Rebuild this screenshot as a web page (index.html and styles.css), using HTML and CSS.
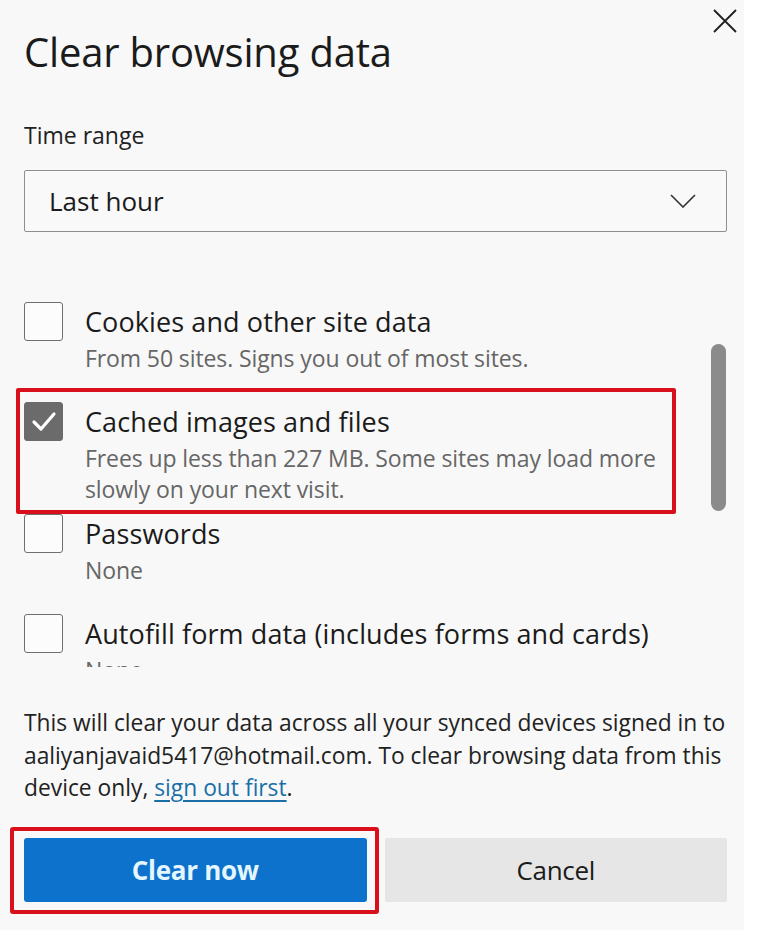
FILE: index.html
```html
<!DOCTYPE html>
<html lang="en">
<head>
<meta charset="utf-8">
<title>Clear browsing data</title>
<link rel="stylesheet" href="styles.css">
</head>
<body>
<div class="dialog">
  <button class="close" aria-label="Close">
    <svg width="26" height="26" viewBox="0 0 26 26"><path d="M2 2 L24 24 M24 2 L2 24" stroke="#1f1f1f" stroke-width="1.8" fill="none"/></svg>
  </button>
  <h1 class="title">Clear browsing data</h1>
  <div class="field-label">Time range</div>
  <div class="select">
    <span>Last hour</span>
    <svg width="26" height="14" viewBox="0 0 26 14"><path d="M1 1 L13 13 L25 1" stroke="#333" stroke-width="1.6" fill="none"/></svg>
  </div>

  <div class="options-wrap">
    <div class="options">
      <div class="item gap-lg">
        <span class="box"></span>
        <div class="text">
          <div class="label">Cookies and other site data</div>
          <div class="sub">From 50 sites. Signs you out of most sites.</div>
        </div>
      </div>
      <div class="item gap-sm marked">
        <span class="box checked">
          <svg width="26" height="22" viewBox="0 0 26 22"><path d="M3 11 L10 18 L23 3" stroke="#fff" stroke-width="3.2" fill="none" stroke-linecap="round" stroke-linejoin="round"/></svg>
        </span>
        <div class="text">
          <div class="label">Cached images and files</div>
          <div class="sub">Frees up less than 227 MB. Some sites may load more slowly on your next visit.</div>
        </div>
      </div>
      <div class="item gap-lg">
        <span class="box"></span>
        <div class="text">
          <div class="label">Passwords</div>
          <div class="sub">None</div>
        </div>
      </div>
      <div class="item">
        <span class="box"></span>
        <div class="text">
          <div class="label">Autofill form data (includes forms and cards)</div>
          <div class="sub">None</div>
        </div>
      </div>
    </div>
    <div class="track"><div class="thumb"></div></div>
  </div>

  <p class="note">This will clear your data across all your synced devices signed in to aaliyanjavaid5417@hotmail.com. To clear browsing data from this device only, <a href="#">sign out first</a>.</p>

  <div class="buttons">
    <button class="btn primary marked-btn">Clear now</button>
    <button class="btn secondary">Cancel</button>
  </div>
</div>
</body>
</html>
```

FILE: styles.css
```css
html, body {
  margin: 0;
  padding: 0;
  background: #ffffff;
}
body {
  font-family: "Open Sans", "Noto Sans", "Liberation Sans", sans-serif;
  color: #1b1b1b;
  width: 760px;
  height: 930px;
  overflow: hidden;
}
.dialog {
  position: relative;
  width: 744px;
  height: 930px;
  box-sizing: border-box;
  background: #f8f8f8;
  padding: 0 17px 0 24px;
  display: flex;
  flex-direction: column;
}
.close {
  position: absolute;
  top: 6px;
  right: 4px;
  border: 0;
  background: transparent;
  padding: 0;
  width: 30px;
  height: 30px;
  display: flex;
  align-items: center;
  justify-content: center;
}
.title {
  margin: 25px 0 0 0;
  font-size: 40px;
  font-weight: 400;
  line-height: 54px;
  letter-spacing: -0.2px;
  color: #1b1b1b;
}
.field-label {
  margin-top: 40px;
  font-size: 23px;
  line-height: 32px;
  color: #222;
}
.select {
  margin-top: 19px;
  height: 62px;
  box-sizing: border-box;
  border: 1px solid #8f8f8f;
  border-radius: 2px;
  background: #f9f9f9;
  display: flex;
  align-items: center;
  justify-content: space-between;
  padding: 0 30px 0 24px;
  font-size: 26px;
  color: #1b1b1b;
}
.options-wrap {
  margin-top: 70px;
  margin-left: -12px;
  padding-left: 12px;
  height: 365px;
  display: flex;
  overflow: hidden;
}
.options {
  flex: 1;
}
.item {
  position: relative;
  display: flex;
  gap: 22px;
}
.item.gap-lg { margin-bottom: 28px; }
.item.gap-sm { margin-bottom: 9px; }
.item.marked::after {
  content: "";
  position: absolute;
  left: -8px;
  top: -14px;
  width: 660px;
  height: 126px;
  box-sizing: border-box;
  border: 4px solid #d9101c;
  border-radius: 2px;
  pointer-events: none;
}
.box {
  flex: none;
  width: 39px;
  height: 39px;
  box-sizing: border-box;
  border: 1.5px solid #6f6f6f;
  border-radius: 3px;
  background: #fcfcfc;
  display: flex;
  align-items: center;
  justify-content: center;
}
.box.checked {
  background: #6b6b6b;
  border-color: #6b6b6b;
}
.text {
  flex: 1;
}
.label {
  font-size: 27px;
  line-height: 40px;
  color: #1b1b1b;
  letter-spacing: 0.1px;
}
.sub {
  font-size: 23px;
  line-height: 31px;
  padding-top: 1px;
  color: #666;
  letter-spacing: -0.1px;
  width: 590px;
}
.track {
  flex: none;
  width: 16px;
  padding-top: 42px;
}
.thumb {
  width: 15px;
  height: 167px;
  border-radius: 8px;
  background: #8b8b8b;
}
.note {
  margin: 40px 0 0 0;
  font-size: 22.8px;
  line-height: 32.5px;
  color: #222;
}
.note a {
  color: #1a6fa8;
  text-decoration: underline;
  text-underline-offset: 4px;
  text-decoration-thickness: 2px;
}
.buttons {
  margin-top: 33px;
  display: flex;
  gap: 18px;
}
.btn {
  flex: 1;
  height: 64px;
  border: 0;
  font-family: inherit;
  font-size: 26px;
  letter-spacing: -0.3px;
}
.btn.primary {
  position: relative;
  background: #0c72cc;
  color: #e4f6ff;
  font-weight: 700;
  border-radius: 3px;
}
.btn.secondary {
  background: #e6e6e6;
  color: #1b1b1b;
  border-radius: 2px;
}
.marked-btn::after {
  content: "";
  position: absolute;
  left: -14px;
  top: -11px;
  right: -12px;
  bottom: -12px;
  border: 4px solid #d9101c;
  border-radius: 3px;
  pointer-events: none;
}
```
